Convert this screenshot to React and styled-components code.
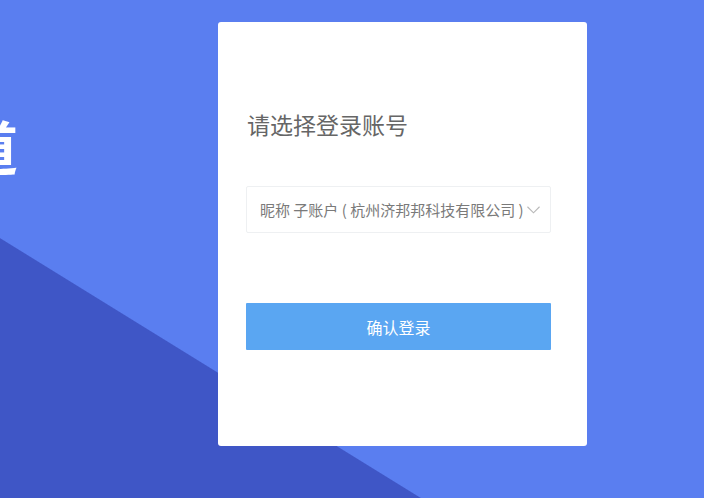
import React from "react";
import styled, { createGlobalStyle } from "styled-components";

const GlobalStyle = createGlobalStyle`
  html, body {
    margin: 0;
    padding: 0;
    overflow: hidden;
  }
  body {
    font-family: "Noto Sans CJK SC", "Noto Sans", sans-serif;
  }
`;

export default function App() {
  return (
    <>
      <GlobalStyle />
      <Page>
        <Hero>
          <Slogan>管理通道</Slogan>
        </Hero>
        <Card>
          <Title>请选择登录账号</Title>
          <AccountSelect>
            <AccountText>昵称 子账户 ( 杭州济邦邦科技有限公司 )</AccountText>
            <Chevron viewBox="0 0 14 8">
              <polyline points="0.5,0.5 7,7 13.5,0.5" />
            </Chevron>
          </AccountSelect>
          <ConfirmButton>确认登录</ConfirmButton>
        </Card>
      </Page>
    </>
  );
}

const Page = styled.div`
  display: flex;
  align-items: flex-start;
  width: 704px;
  height: 498px;
  padding-top: 22px;
  box-sizing: border-box;
  background: linear-gradient(211.7deg, #5a7ef0 572px, #3f56c6 573px);
`;

const Hero = styled.div`
  flex: 0 0 218px;
  display: flex;
`;

const Slogan = styled.h1`
  margin: 94px 0 0 -214px;
  font-size: 58px;
  line-height: 1;
  font-weight: 700;
  color: #fff;
  white-space: nowrap;
`;

const Card = styled.div`
  width: 369px;
  height: 424px;
  box-sizing: border-box;
  padding: 87px 36px 0 28px;
  background: #fff;
  border-radius: 3px;
`;

const Title = styled.div`
  font-size: 23px;
  line-height: 30px;
  color: #666;
  padding-left: 1px;
`;

const AccountSelect = styled.div`
  display: flex;
  align-items: center;
  height: 47px;
  margin-top: 47px;
  padding: 0 6px 0 13px;
  box-sizing: border-box;
  border: 1px solid #eef0f2;
  border-radius: 2px;
`;

const AccountText = styled.span`
  font-size: 15px;
  color: #7a7a7a;
  white-space: nowrap;
  overflow: hidden;
`;

const Chevron = styled.svg`
  flex-shrink: 0;
  width: 13px;
  height: 8px;
  margin-left: 3px;
  fill: none;
  stroke: #b8b8b8;
  stroke-width: 1.2;
`;

const ConfirmButton = styled.button`
  display: block;
  width: 100%;
  height: 47px;
  margin-top: 70px;
  border: none;
  border-radius: 1px;
  background: #5aa6f2;
  color: #fff;
  font-family: inherit;
  font-size: 16px;
`;
